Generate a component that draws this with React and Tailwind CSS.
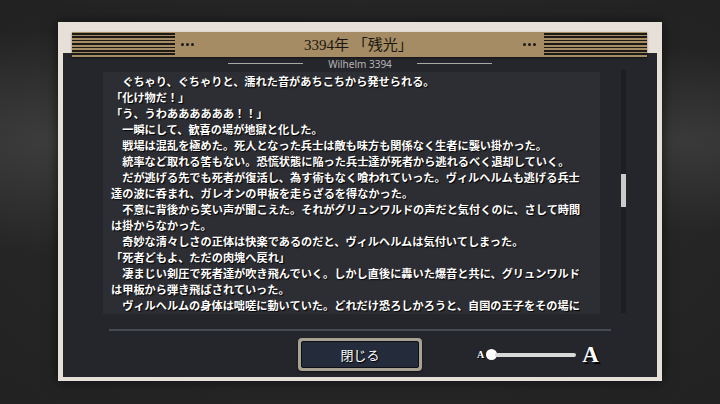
import React from "react";

const lines = [
  "　ぐちゃり、ぐちゃりと、濡れた音があちこちから発せられる。",
  "「化け物だ！」",
  "「う、うわああああああ！！」",
  "　一瞬にして、歓喜の場が地獄と化した。",
  "　戦場は混乱を極めた。死人となった兵士は敵も味方も関係なく生者に襲い掛かった。",
  "　統率など取れる筈もない。恐慌状態に陥った兵士達が死者から逃れるべく退却していく。",
  "　だが逃げる先でも死者が復活し、為す術もなく喰われていった。ヴィルヘルムも逃げる兵士",
  "達の波に呑まれ、ガレオンの甲板を走らざるを得なかった。",
  "　不意に背後から笑い声が聞こえた。それがグリュンワルドの声だと気付くのに、さして時間",
  "は掛からなかった。",
  "　奇妙な清々しさの正体は快楽であるのだと、ヴィルヘルムは気付いてしまった。",
  "「死者どもよ、ただの肉塊へ戻れ」",
  "　凄まじい剣圧で死者達が吹き飛んでいく。しかし直後に轟いた爆音と共に、グリュンワルド",
  "は甲板から弾き飛ばされていった。",
  "　ヴィルヘルムの身体は咄嗟に動いていた。どれだけ恐ろしかろうと、自国の王子をその場に",
];

function Dots() {
  return (
    <div className="flex gap-[2px]">
      <span className="block w-[3px] h-[3px] rounded-full bg-[#1c1a16]"></span>
      <span className="block w-[3px] h-[3px] rounded-full bg-[#1c1a16]"></span>
      <span className="block w-[3px] h-[3px] rounded-full bg-[#1c1a16]"></span>
    </div>
  );
}

function Stripes() {
  return (
    <div className="w-[103px] h-[24px] bg-[repeating-linear-gradient(to_bottom,#1d1a15_0px,#1d1a15_1.6px,transparent_1.6px,transparent_3.4px)]"></div>
  );
}

export default function App() {
  return (
    <div className="w-[720px] h-[404px] overflow-hidden bg-[#262626] bg-[radial-gradient(ellipse_at_8%_35%,#3d3d3d_0%,transparent_30%),radial-gradient(ellipse_at_95%_35%,#3a3a3a_0%,transparent_25%),radial-gradient(ellipse_at_50%_50%,#2c2c2c_0%,#222222_100%)] pt-[22px] pl-[58px]">
      {/* frame */}
      <div className="relative w-[604px] h-[359px] bg-[#e6e0d8] pt-[31px] px-[5px] pb-[4px] shadow-[0_0_12px_rgba(0,0,0,0.6)]">
        {/* header */}
        <div className="absolute left-[14px] top-[10px] w-[575px] h-[25px] bg-[#a58c64] flex items-center shadow-[0_1px_2px_rgba(0,0,0,0.5)] z-10">
          <Stripes />
          <div className="ml-[6px]"><Dots /></div>
          <div className="flex-1 text-center text-[15px] text-[#1a1712] font-['Liberation_Serif','Noto_Sans_CJK_JP',serif] leading-none pt-[1px]">
            3394年 「残光」
          </div>
          <div className="mr-[8px]"><Dots /></div>
          <Stripes />
        </div>

        {/* dark panel */}
        <div className="w-[594px] h-[324px] bg-[#25262b] flex flex-col">
          {/* subtitle */}
          <div className="h-[19px] flex items-center justify-center gap-[8px] pt-[2px]">
            <span className="block w-[75px] h-px bg-[#a9a9a9]"></span>
            <span className="text-[10px] text-[#b5b5b5] font-['Noto_Sans',sans-serif] leading-none px-[17px]">Wilhelm 3394</span>
            <span className="block w-[75px] h-px bg-[#a9a9a9]"></span>
          </div>

          {/* text + scrollbar */}
          <div className="flex items-start">
            <div className="ml-[40px] w-[497px] h-[242px] bg-[#2d2e33] pl-[8px] pt-[1px] overflow-hidden">
              {lines.map((l, i) => (
                <div
                  key={i}
                  className="whitespace-nowrap text-[11.2px] leading-[16px] text-white font-bold font-['Noto_Sans_CJK_JP',sans-serif] [text-shadow:1px_1px_1px_#000]"
                >
                  {l}
                </div>
              ))}
            </div>
            <div className="ml-[21px] -mt-[2px] w-[5px] h-[243px] bg-[#1d1e22] pt-[104px]">
              <div className="w-[5px] h-[33px] bg-[#cbcbcb]"></div>
            </div>
          </div>

          {/* divider */}
          <div className="mt-[15px] ml-[46px] w-[502px] h-[2px] bg-[#464b51]"></div>

          {/* bottom */}
          <div className="mt-[7px] flex items-center">
            <div className="ml-[235px] w-[124px] h-[33px] rounded-[4px] bg-[#a8a293] p-[3px] shadow-[0_1px_2px_rgba(0,0,0,0.6)]">
              <div className="w-full h-full rounded-[2px] bg-[#242b3a] border border-[#0e1015] flex items-center justify-center text-[13px] text-white font-['Noto_Sans_CJK_JP',sans-serif] [text-shadow:1px_1px_1px_#000]">
                閉じる
              </div>
            </div>
            <div className="ml-[55px] flex items-center">
              <span className="text-[10px] font-bold text-white font-['Liberation_Serif',serif] leading-none [text-shadow:1px_1px_0_#000]">A</span>
              <div className="ml-[2px] flex items-center">
                <span className="block w-[11px] h-[11px] rounded-full bg-white"></span>
                <span className="block -ml-[2px] w-[81px] h-[4px] rounded-full bg-[#d9d9d9]"></span>
              </div>
              <span className="ml-[6px] text-[23px] font-bold text-white font-['Liberation_Serif',serif] leading-none [text-shadow:2px_2px_0_#000]">A</span>
            </div>
          </div>
        </div>
      </div>
    </div>
  );
}
